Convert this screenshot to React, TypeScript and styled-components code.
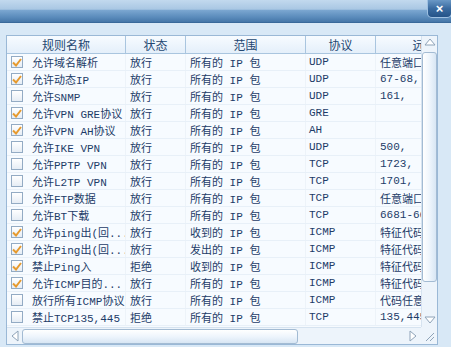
import React from "react";
import styled, { createGlobalStyle } from "styled-components";

const GlobalStyle = createGlobalStyle`
  html, body {
    margin: 0;
    padding: 0;
    background: #d8e8f6;
  }
  * {
    box-sizing: border-box;
  }
`;

const COLS = "119px 60px 120px 70px 122px";

const Window = styled.div`
  width: 451px;
  height: 347px;
  overflow: hidden;
  background: #d8e8f6;
  font-family: "Liberation Mono", "Noto Sans CJK SC", monospace;
`;

const TitleBar = styled.div`
  height: 23px;
  display: flex;
  justify-content: flex-end;
  align-items: flex-start;
  background: linear-gradient(
    to bottom,
    #c2d9ee 0%,
    #a9c7e3 40%,
    #7aa6d0 45%,
    #5a8bbb 75%,
    #4576a8 95%,
    #2f5e8f 100%
  );
`;

const CloseButton = styled.div`
  width: 25px;
  height: 18px;
  margin-right: -1px;
  display: flex;
  align-items: center;
  justify-content: center;
  border: 1px solid #9fc1e2;
  border-top: none;
  border-radius: 0 0 5px 5px;
  background: linear-gradient(to bottom, #6a98c6 0%, #3a6ba0 50%, #245388 100%);
  color: #ffffff;
  font: bold 13px "Liberation Sans", sans-serif;
`;

const Body = styled.div`
  padding: 12px 0 0 6px;
`;

const Panel = styled.div`
  width: 432px;
  height: 310px;
  display: grid;
  grid-template-columns: 414px 16px;
  grid-template-rows: 291px 17px;
  border: 1px solid #9ab8d6;
  background: #f6fafe;
`;

const Viewport = styled.div`
  overflow: hidden;
`;

const HeaderRow = styled.div`
  display: grid;
  grid-template-columns: ${COLS};
  height: 18px;
  border-bottom: 1px solid #a9c5df;
  background: linear-gradient(to bottom, #f7fbff 0%, #e4effa 100%);
`;

const HeaderCell = styled.div`
  border-right: 1px solid #a9c5df;
  text-align: center;
  font: 12px/17px "Noto Sans CJK SC", sans-serif;
  color: #244771;
  white-space: nowrap;
  overflow: hidden;
`;

const Row = styled.div`
  display: grid;
  grid-template-columns: ${COLS};
  height: 17px;
  border-bottom: 1px solid #e8f0f8;
  background: #f7fbff;
`;

const Cell = styled.div<{ $pad?: number }>`
  display: flex;
  align-items: center;
  gap: 9px;
  padding-left: ${(p) => p.$pad ?? 4}px;
  border-right: 1px solid #edf3f9;
  font-size: 11px;
  color: #1d3c68;
  white-space: nowrap;
  overflow: hidden;
`;

const Box = styled.span<{ $checked: boolean }>`
  flex: none;
  width: 12px;
  height: 12px;
  border: 1px solid #93abc4;
  background: linear-gradient(to bottom, #ffffff, #e6edf5);
  display: flex;
  align-items: center;
  justify-content: center;
`;

const VScroll = styled.div`
  grid-row: 1;
  grid-column: 2;
  display: flex;
  flex-direction: column;
  align-items: center;
  background: #edf4fb;
  border-left: 1px solid #d6e3f0;
`;

const VThumb = styled.div`
  width: 15px;
  height: 230px;
  margin: 4px 0 auto;
  border: 1px solid #a3bbd3;
  border-radius: 3px;
  background: linear-gradient(to right, #ffffff 0%, #eef5fc 50%, #d8e6f4 100%);
`;

const HScroll = styled.div`
  grid-row: 2;
  grid-column: 1;
  display: flex;
  align-items: center;
  padding: 0 2px 0 2px;
  background: #edf4fb;
  border-top: 1px solid #d6e3f0;
`;

const HThumb = styled.div`
  width: 276px;
  height: 15px;
  margin-left: 1px;
  margin-right: auto;
  border: 1px solid #a3bbd3;
  border-radius: 3px;
  background: linear-gradient(to bottom, #ffffff 0%, #eef5fc 50%, #d8e6f4 100%);
`;

const Corner = styled.div`
  grid-row: 2;
  grid-column: 2;
  display: flex;
  align-items: flex-end;
  justify-content: flex-end;
  background: #edf4fb;
  padding: 0 2px 2px 0;
`;

const Arrow = ({ dir }: { dir: "up" | "down" | "left" | "right" }) => {
  const pts = {
    up: "1,9 6,3 11,9",
    down: "1,2 6,8 11,2",
    left: "9,1 3,6 9,11",
    right: "3,1 9,6 3,11",
  }[dir];
  return (
    <svg width="12" height="12" viewBox="0 0 12 12" style={{ flex: "none" }}>
      <polygon points={pts} fill="#ffffff" stroke="#8ea3b8" strokeWidth="1" />
    </svg>
  );
};

const Check = () => (
  <svg width="10" height="9" viewBox="0 0 10 9">
    <path d="M1 4.5 L4 7.5 L9 1" fill="none" stroke="#e69a2e" strokeWidth="2" />
  </svg>
);

type Rule = [boolean, string, string, string, string, string];

const rules: Rule[] = [
  [true, "允许域名解析", "放行", "所有的 IP 包", "UDP", "任意端口"],
  [true, "允许动态IP", "放行", "所有的 IP 包", "UDP", "67-68,"],
  [false, "允许SNMP", "放行", "所有的 IP 包", "UDP", "161,"],
  [true, "允许VPN GRE协议", "放行", "所有的 IP 包", "GRE", ""],
  [true, "允许VPN AH协议", "放行", "所有的 IP 包", "AH", ""],
  [false, "允许IKE VPN", "放行", "所有的 IP 包", "UDP", "500,"],
  [false, "允许PPTP VPN", "放行", "所有的 IP 包", "TCP", "1723,"],
  [false, "允许L2TP VPN", "放行", "所有的 IP 包", "TCP", "1701,"],
  [false, "允许FTP数据", "放行", "所有的 IP 包", "TCP", "任意端口"],
  [false, "允许BT下载", "放行", "所有的 IP 包", "TCP", "6681-6699,"],
  [true, "允许ping出(回...", "放行", "收到的 IP 包", "ICMP", "特征代码"],
  [true, "允许Ping出(回...", "放行", "发出的 IP 包", "ICMP", "特征代码"],
  [true, "禁止Ping入", "拒绝", "收到的 IP 包", "ICMP", "特征代码"],
  [true, "允许ICMP目的...", "放行", "所有的 IP 包", "ICMP", "特征代码"],
  [false, "放行所有ICMP协议", "放行", "所有的 IP 包", "ICMP", "代码任意"],
  [false, "禁止TCP135,445", "拒绝", "所有的 IP 包", "TCP", "135,445"],
];

const headers = ["规则名称", "状态", "范围", "协议", "远程端口"];

const App: React.FC = () => {
  return (
    <Window>
      <GlobalStyle />
      <TitleBar>
        <CloseButton>×</CloseButton>
      </TitleBar>
      <Body>
        <Panel>
          <Viewport>
            <HeaderRow>
              {headers.map((h) => (
                <HeaderCell key={h}>{h}</HeaderCell>
              ))}
            </HeaderRow>
            {rules.map(([on, name, action, scope, proto, port]) => (
              <Row key={name}>
                <Cell $pad={4}>
                  <Box $checked={on}>{on && <Check />}</Box>
                  {name}
                </Cell>
                <Cell>{action}</Cell>
                <Cell>{scope}</Cell>
                <Cell $pad={3}>{proto}</Cell>
                <Cell>{port}</Cell>
              </Row>
            ))}
          </Viewport>
          <VScroll>
            <Arrow dir="up" />
            <VThumb />
            <Arrow dir="down" />
          </VScroll>
          <HScroll>
            <Arrow dir="left" />
            <HThumb />
            <Arrow dir="right" />
          </HScroll>
          <Corner>
            <svg width="11" height="11" viewBox="0 0 11 11">
              <path d="M10 2 L2 10 M10 6 L6 10" stroke="#8ea3b8" strokeWidth="1" />
            </svg>
          </Corner>
        </Panel>
      </Body>
    </Window>
  );
};

export default App;
